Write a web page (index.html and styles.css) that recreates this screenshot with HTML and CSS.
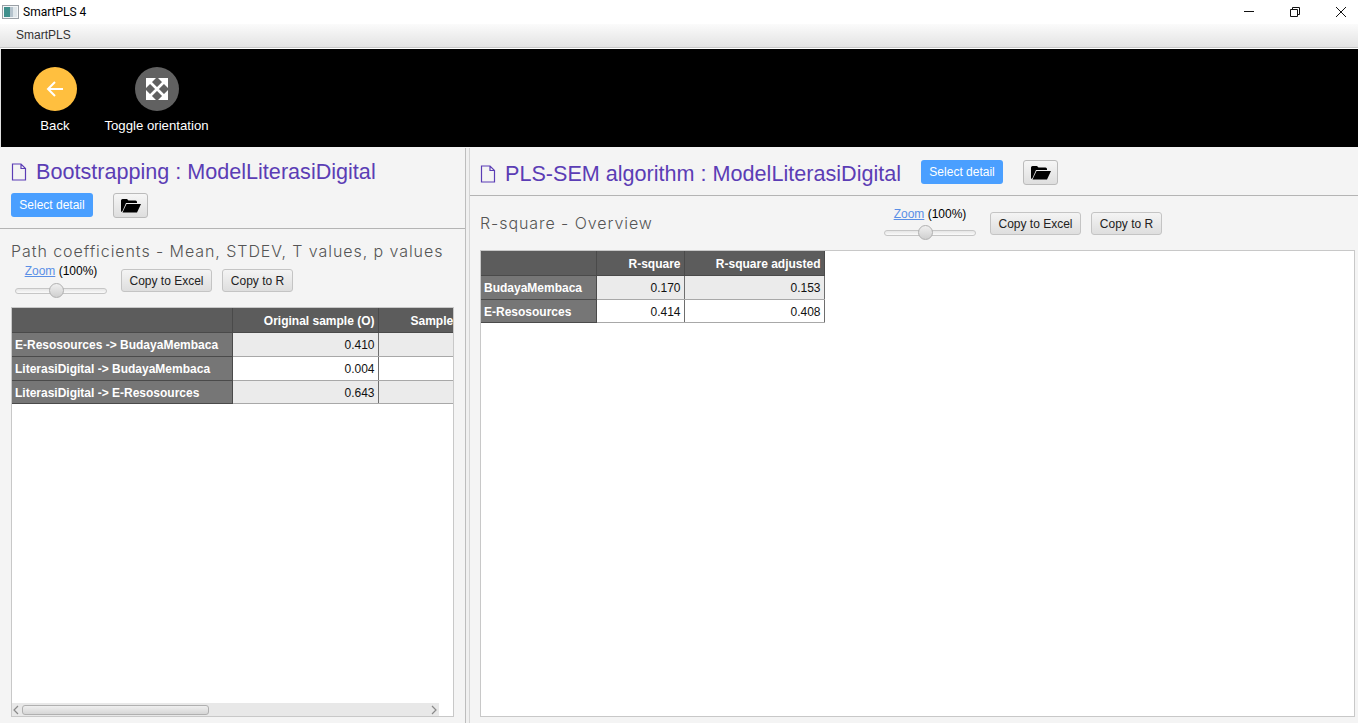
FILE: index.html
```html
<!DOCTYPE html>
<html lang="en">
<head>
  <meta charset="UTF-8" />
  <title>SmartPLS 4</title>
  <link rel="stylesheet" href="styles.css">
</head>
<body>

  <!-- window chrome -->
  <div class="titlebar">
    <svg class="app-icon" width="17" height="16" viewBox="0 0 17 16">
      <rect x="0.5" y="1.5" width="16" height="13" fill="#f4f6f8" stroke="#9aa0a6"/>
      <rect x="2" y="3" width="6" height="10" fill="#3f8f8c"/>
      <rect x="8" y="3" width="3" height="10" fill="#b4c2cc"/>
      <rect x="11" y="3" width="4" height="10" fill="#dfe6ea"/>
    </svg>
    <span class="app-name">SmartPLS 4</span>
    <div class="win-buttons">
      <svg width="12" height="12" viewBox="0 0 12 12"><path d="M1 5.500h10" stroke="#111" fill="none"/></svg>
      <svg width="12" height="12" viewBox="0 0 12 12"><path d="M1.500 3.500h7v7h-7zM3.500 3.500v-2h7v7h-2" stroke="#111" fill="none"/></svg>
      <svg width="12" height="12" viewBox="0 0 12 12"><path d="M1 1l10 10M11 1L1 11" stroke="#111" fill="none"/></svg>
    </div>
  </div>
  <div class="menubar"><span>SmartPLS</span></div>

  <!-- toolbar -->
  <div class="toolbar">
    <div class="tool tool-back">
      <div class="circle circle-back">
        <svg width="22" height="22" viewBox="0 0 22 22"><path d="M19 11H4M11 4l-7 7 7 7" stroke="#fff" stroke-width="2" fill="none"/></svg>
      </div>
      <span>Back</span>
    </div>
    <div class="tool tool-toggle">
      <div class="circle circle-toggle">
        <svg width="24" height="24" viewBox="0 0 24 24">
          <path d="M1 1h10L1 11zM23 1v10L13 1zM23 23H13l10-10zM1 23V13l10 10z" fill="#fff"/>
          <path d="M4 4l16 16M20 4L4 20" stroke="#fff" stroke-width="2.600" fill="none"/>
        </svg>
      </div>
      <span>Toggle orientation</span>
    </div>
  </div>

  <div class="panels">

    <!-- left: bootstrapping -->
    <section class="panel panel-left">
      <div class="head">
        <h2 class="title">
          <svg class="page-icon" width="16" height="18" viewBox="0 0 16 18"><path d="M1.500 1h8.500l4.500 4.500V17h-13zM10 1v4.500h4.500" stroke="#5b3db5" stroke-width="1.200" fill="none"/></svg>
          Bootstrapping : ModelLiterasiDigital
        </h2>
        <div class="head-actions">
          <button class="btn-select">Select detail</button>
          <button class="btn-folder">
            <svg width="20" height="15" viewBox="0 0 20 15"><path d="M0 2.500Q0 1 1.500 1H6l1.500 1.500h7Q16 2.500 16 4v1H5L1.500 13 0 14zM5.500 6H20l-4 8.500H1.500z" fill="#000"/></svg>
          </button>
        </div>
      </div>
      <div class="body">
        <h3 class="subtitle">Path coefficients - Mean, STDEV, T values, p values</h3>
        <div class="controls">
          <div class="zoom">
            <div class="zoom-label"><a href="#">Zoom</a> (100%)</div>
            <div class="slider"><i></i></div>
          </div>
          <button class="btn">Copy to Excel</button>
          <button class="btn btn-r">Copy to R</button>
        </div>
        <div class="table-box table-box-left">
          <table class="grid grid-left">
            <tr><th class="corner"></th><th class="col-o">Original sample (O)</th><th class="col-m">Sample mean (M)</th></tr>
            <tr class="odd"><th>E-Resosources -&gt; BudayaMembaca</th><td>0.410</td><td></td></tr>
            <tr><th>LiterasiDigital -&gt; BudayaMembaca</th><td>0.004</td><td></td></tr>
            <tr class="odd"><th>LiterasiDigital -&gt; E-Resosources</th><td>0.643</td><td></td></tr>
          </table>
          <div class="hscroll">
            <svg width="8" height="10" viewBox="0 0 8 10"><path d="M6 1L2 5l4 4" stroke="#8a8a8a" stroke-width="1.200" fill="none"/></svg>
            <div class="hscroll-track"><div class="hscroll-thumb"></div></div>
            <svg width="8" height="10" viewBox="0 0 8 10"><path d="M2 1l4 4-4 4" stroke="#8a8a8a" stroke-width="1.200" fill="none"/></svg>
          </div>
        </div>
      </div>
    </section>

    <div class="divider"></div>

    <!-- right: pls-sem -->
    <section class="panel panel-right">
      <div class="head head-row">
        <h2 class="title">
          <svg class="page-icon" width="16" height="18" viewBox="0 0 16 18"><path d="M1.500 1h8.500l4.500 4.500V17h-13zM10 1v4.500h4.500" stroke="#5b3db5" stroke-width="1.200" fill="none"/></svg>
          PLS-SEM algorithm : ModelLiterasiDigital
        </h2>
        <button class="btn-select">Select detail</button>
        <button class="btn-folder">
          <svg width="20" height="15" viewBox="0 0 20 15"><path d="M0 2.500Q0 1 1.500 1H6l1.500 1.500h7Q16 2.500 16 4v1H5L1.500 13 0 14zM5.500 6H20l-4 8.500H1.500z" fill="#000"/></svg>
        </button>
      </div>
      <div class="body body-right">
        <div class="controls controls-right">
          <h3 class="subtitle">R-square - Overview</h3>
          <div class="zoom">
            <div class="zoom-label"><a href="#">Zoom</a> (100%)</div>
            <div class="slider"><i></i></div>
          </div>
          <button class="btn">Copy to Excel</button>
          <button class="btn btn-r">Copy to R</button>
        </div>
        <div class="table-box table-box-right">
          <table class="grid grid-right">
            <tr><th class="corner"></th><th>R-square</th><th>R-square adjusted</th></tr>
            <tr class="odd"><th>BudayaMembaca</th><td>0.170</td><td>0.153</td></tr>
            <tr><th>E-Resosources</th><td>0.414</td><td>0.408</td></tr>
          </table>
        </div>
      </div>
    </section>

  </div>

</body>
</html>
```

FILE: styles.css
```css
* { box-sizing: border-box; }

html, body {
  margin: 0;
  height: 723px;
  overflow: hidden;
}

body {
  font-family: 'Liberation Sans', Arial, sans-serif;
  font-size: 12px;
  background: #f4f4f4;
  color: #000;
}

/* window chrome */
.titlebar {
  height: 24px;
  background: #fff;
  display: flex;
  align-items: center;
  padding-left: 2px;
}
.app-icon { margin-right: 4px; }
.app-name { color: #000; font: 12px Roboto, sans-serif; }
.win-buttons {
  margin-left: auto;
  display: flex;
  gap: 34px;
  padding-right: 11px;
}

.menubar {
  height: 24px;
  background: linear-gradient(#fbfbfb, #e3e3e3);
  border-bottom: 1px solid #c8c8c8;
  padding-left: 16px;
  line-height: 23px;
  color: #333;
}

/* toolbar */
.toolbar {
  height: 100px;
  background: #000;
  border-top: 1px solid #fff;
  border-bottom: 1px solid #f4f4f4;
  border-left: 1px solid #e0e0e0;
  display: flex;
  padding-top: 18px;
  padding-left: 5px;
}
.tool {
  display: flex;
  flex-direction: column;
  align-items: center;
  color: #fff;
  gap: 7px;
  font-size: 13.2px;
  line-height: 15px;
  white-space: nowrap;
}
.tool-back { width: 98px; }
.tool-toggle { width: 105px; }
.circle {
  width: 44px;
  height: 44px;
  border-radius: 50%;
  display: flex;
  align-items: center;
  justify-content: center;
}
.circle-back { background: #ffbf3f; }
.circle-toggle { background: #616161; }

/* panels */
.panels {
  display: flex;
  height: 575px;
}
.panel { background: #f4f4f4; }
.panel-left { width: 465px; }
.panel-right { flex: 1; }
.divider {
  width: 5px;
  background: #f0f0f0;
  border-left: 1px solid #bdbdbd;
  border-right: 1px solid #d4d4d4;
}

.head {
  border-bottom: 1px solid #b4b4b4;
  padding: 10px 11px 0;
  height: 81px;
}
.head-row {
  height: 48px;
  display: flex;
  align-items: flex-start;
  padding: 12px 10px 0;
}
.title {
  margin: 0;
  font-size: 21.6px;
  font-weight: normal;
  line-height: 28px;
  color: #5b3db5;
  display: flex;
  align-items: center;
}
.page-icon { margin-right: 9px; flex: none; }
.head-actions {
  display: flex;
  gap: 20px;
  margin-top: 7px;
}
.head-row .btn-select { margin: 0 20px; }

.btn-select {
  width: 82px;
  height: 24px;
  border: none;
  border-radius: 3px;
  background: #4a9fff;
  color: #fff;
  font: 12px 'Liberation Sans', Arial, sans-serif;
  padding: 0;
}
.btn-folder {
  width: 35px;
  height: 25px;
  border: 1px solid #bbb;
  border-radius: 3px;
  background: linear-gradient(#f6f6f6, #dedede);
  padding: 0;
  display: flex;
  align-items: center;
  justify-content: center;
}

.body { padding: 11px 11px 0; }
.body-right { padding: 16px 3px 0 10px; }

.subtitle {
  margin: 0;
  font-family: 'Inter', sans-serif;
  font-weight: 300;
  font-size: 16px;
  line-height: 22px;
  letter-spacing: 0.93px;
  color: #555;
}

.controls {
  display: flex;
  align-items: flex-start;
  height: 45px;
  padding: 2px 0 0 4px;
}
.controls .btn { margin-top: 5px; margin-left: 10px; }
.zoom {
  width: 92px;
  margin-right: 4px;
  text-align: center;
}
.zoom-label { line-height: 14px; font-size: 12px; }
.zoom-label a { color: #5a8fe6; }
.slider {
  position: relative;
  height: 6px;
  margin-top: 10px;
  border: 1px solid #c6c6c6;
  border-radius: 3px;
  background: linear-gradient(#e6e6e6, #fafafa);
}
.slider i {
  position: absolute;
  left: 33px;
  top: -6px;
  width: 15px;
  height: 15px;
  border-radius: 50%;
  border: 1px solid #b0b0b0;
  background: linear-gradient(#f0f0f0, #cfcfcf);
}

.btn {
  width: 91px;
  height: 23px;
  border: 1px solid #c4c4c4;
  border-radius: 3px;
  background: linear-gradient(#f4f4f4, #dedede);
  color: #222;
  font: 12px 'Liberation Sans', Arial, sans-serif;
  padding: 0;
  white-space: nowrap;
}
.btn-r { width: 71px; }

.controls-right {
  height: 38px;
  padding: 0;
}
.controls-right .subtitle { width: 404px; }
.controls-right .btn { margin-top: 0; }
.controls-right .zoom { margin-top: -5px; margin-right: 4px; }
.controls-right .slider { margin-top: 9px; }

/* result tables */
.table-box {
  position: relative;
  background: #fff;
  border: 1px solid #c8c8c8;
  overflow: hidden;
}
.table-box-left { height: 410px; width: 443px; }
.table-box-right { height: 467px; }

.grid {
  border-collapse: collapse;
  table-layout: fixed;
  font-size: 12px;
  margin-left: -1px;
}
.grid tr { height: 24px; }
.grid tr:last-child { height: 23px; }
.grid th, .grid td {
  padding: 2px 3px 0 4px;
  white-space: nowrap;
  overflow: hidden;
}
.grid th {
  background: #767676;
  color: #fff;
  text-align: left;
  border-bottom: 1px solid #4a4a4a;
  border-right: 1px solid #4a4a4a;
}
.grid tr:first-child th {
  background: #5c5c5c;
  text-align: right;
}
.grid td {
  background: #fff;
  text-align: right;
  border-bottom: 1px solid #a8a8a8;
  border-right: 1px solid #6e6e6e;
  color: #111;
}
.grid tr.odd td { background: #ebebeb; }

.grid-left { width: 445px; }
.grid-left .corner { width: 221px; }
.grid-left .col-o { width: 146px; }
.grid-left .col-m { width: 78px; text-align: left; padding-left: 32px; }

.grid-right { width: 344px; }
.grid-right .corner { width: 116px; }
.grid-right th:nth-child(2) { width: 88px; }
.grid-right th:nth-child(3) { width: 140px; }

.hscroll {
  position: absolute;
  left: 0;
  bottom: 0;
  width: 427px;
  height: 13px;
  background: #e8e8e8;
  display: flex;
  align-items: center;
  justify-content: space-between;
  padding: 0 1px 0 0;
}
.hscroll-track { flex: 1; padding: 0 0 0 2px; }
.hscroll-thumb {
  width: 187px;
  height: 10px;
  border: 1px solid #b0b0b0;
  border-radius: 3px;
  background: linear-gradient(#efefef, #d6d6d6);
}
```
